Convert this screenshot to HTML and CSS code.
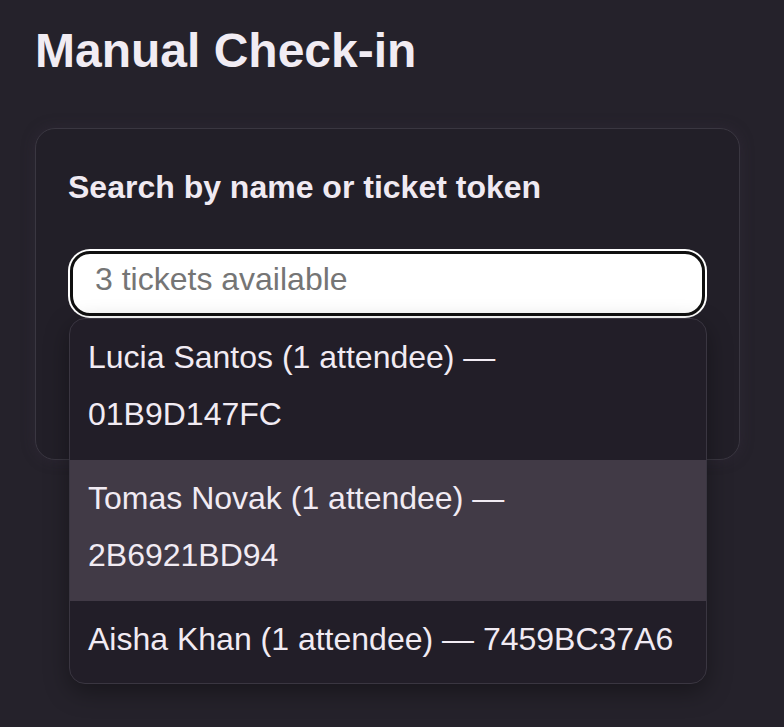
FILE: index.html
```html
<!DOCTYPE html>
<html lang="en">
<head>
<meta charset="utf-8">
<title>Manual Check-in</title>
<link rel="stylesheet" href="styles.css">
</head>
<body>
<main class="page">
  <h1 class="title">Manual Check-in</h1>
  <section class="card">
    <label class="label" for="search">Search by name or ticket token</label>
    <div class="combo">
      <input id="search" class="search" type="text" placeholder="3 tickets available">
      <ul class="menu">
        <li class="item">Lucia Santos (1 attendee) — 01B9D147FC</li>
        <li class="item active">Tomas Novak (1 attendee) — 2B6921BD94</li>
        <li class="item last">Aisha Khan (1 attendee) — 7459BC37A6</li>
      </ul>
    </div>
  </section>
</main>
</body>
</html>
```

FILE: styles.css
```css
* { box-sizing: border-box; }

html, body {
  margin: 0;
  height: 100%;
  background: #25222b;
}

body {
  font-family: "Liberation Sans", Arial, sans-serif;
  color: #f1ebf3;
}

.page {
  padding: 23px 0 0 35px;
}

.title {
  margin: 0;
  font-size: 48px;
  line-height: 55px;
  font-weight: 700;
  color: #f1ecf3;
}

.card {
  width: 705px;
  margin-top: 50px;
  padding: 36px 32px 143px;
  background: #221f28;
  border: 1px solid #3a3741;
  border-radius: 20px;
  box-shadow: 0 0 14px rgba(60, 50, 70, 0.35);
}

.label {
  display: block;
  font-size: 32px;
  line-height: 44px;
  font-weight: 700;
  color: #f0eaf2;
  margin-bottom: 42px;
}

.combo {
  position: relative;
}

.search {
  display: block;
  width: calc(100% - 4px);
  margin: 0 2px;
  height: 65px;
  padding: 0 22px 8px;
  font-family: "Liberation Sans", Arial, sans-serif;
  font-size: 32px;
  color: #111;
  background: #fff;
  border: 3px solid #101010;
  border-radius: 20px;
  box-shadow: 0 0 0 2px #ffffff;
  outline: none;
}

.search::placeholder {
  color: #757575;
}

.menu {
  position: absolute;
  left: 1px;
  right: 0;
  top: 67px;
  margin: 0;
  padding: 0;
  list-style: none;
  background: #221e28;
  border: 1px solid #3a3641;
  border-radius: 16px;
  overflow: hidden;
  box-shadow: 0 8px 24px rgba(0, 0, 0, 0.35);
  z-index: 2;
}

.item {
  padding: 10px 18px 17px;
  font-size: 32px;
  line-height: 57px;
  color: #f1ebf3;
}

.item.active {
  background: #413a46;
}

.item.last {
  padding-bottom: 15px;
}
```
